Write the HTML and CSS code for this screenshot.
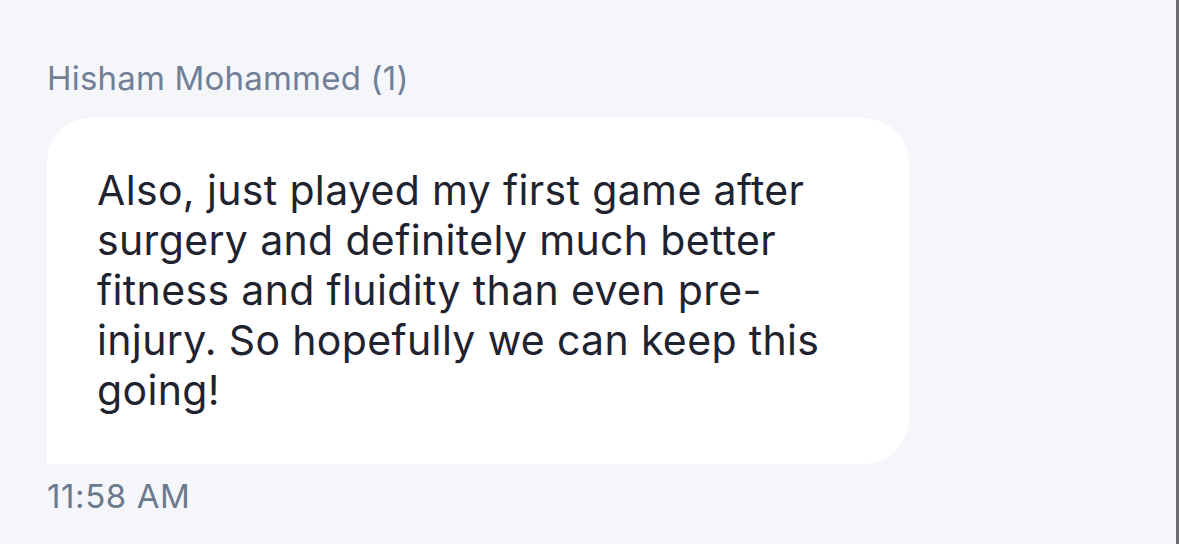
FILE: index.html
```html
<!DOCTYPE html>
<html>
<head>
<meta charset="utf-8">
<link rel="stylesheet" href="styles.css">
</head>
<body>
<div class="pane">
  <div class="message">
    <div class="sender">Hisham Mohammed (1)</div>
    <div class="bubble">
      <p class="text">Also, just played my first game after surgery and definitely much better fitness and fluidity than even pre-injury. So hopefully we can keep this going!</p>
    </div>
    <div class="time">11:58 AM</div>
  </div>
</div>
</body>
</html>
```

FILE: styles.css
```css
html, body {
  margin: 0;
  padding: 0;
  height: 100%;
}
body {
  background: #f5f6fa;
  font-family: Inter, "Noto Sans", sans-serif;
}
.pane {
  height: 544px;
  box-sizing: border-box;
  border-right: 3px solid #6b6d73;
  padding: 54px 0 0 47px;
}
.message {
  display: flex;
  flex-direction: column;
  align-items: flex-start;
}
.sender {
  font-size: 33px;
  line-height: 48px;
  letter-spacing: 0.2px;
  color: #718096;
  margin-bottom: 16px;
}
.bubble {
  box-sizing: border-box;
  width: 862px;
  background: #ffffff;
  border-radius: 44px 46px 46px 0;
  padding: 47px 50px 49px 50px;
}
.text {
  margin: 0;
  font-size: 41px;
  line-height: 50px;
  letter-spacing: 0.35px;
  color: #1f2330;
}
.time {
  margin-top: 12px;
  font-size: 33px;
  line-height: 40px;
  letter-spacing: 0.6px;
  color: #6b7a8c;
}
```
